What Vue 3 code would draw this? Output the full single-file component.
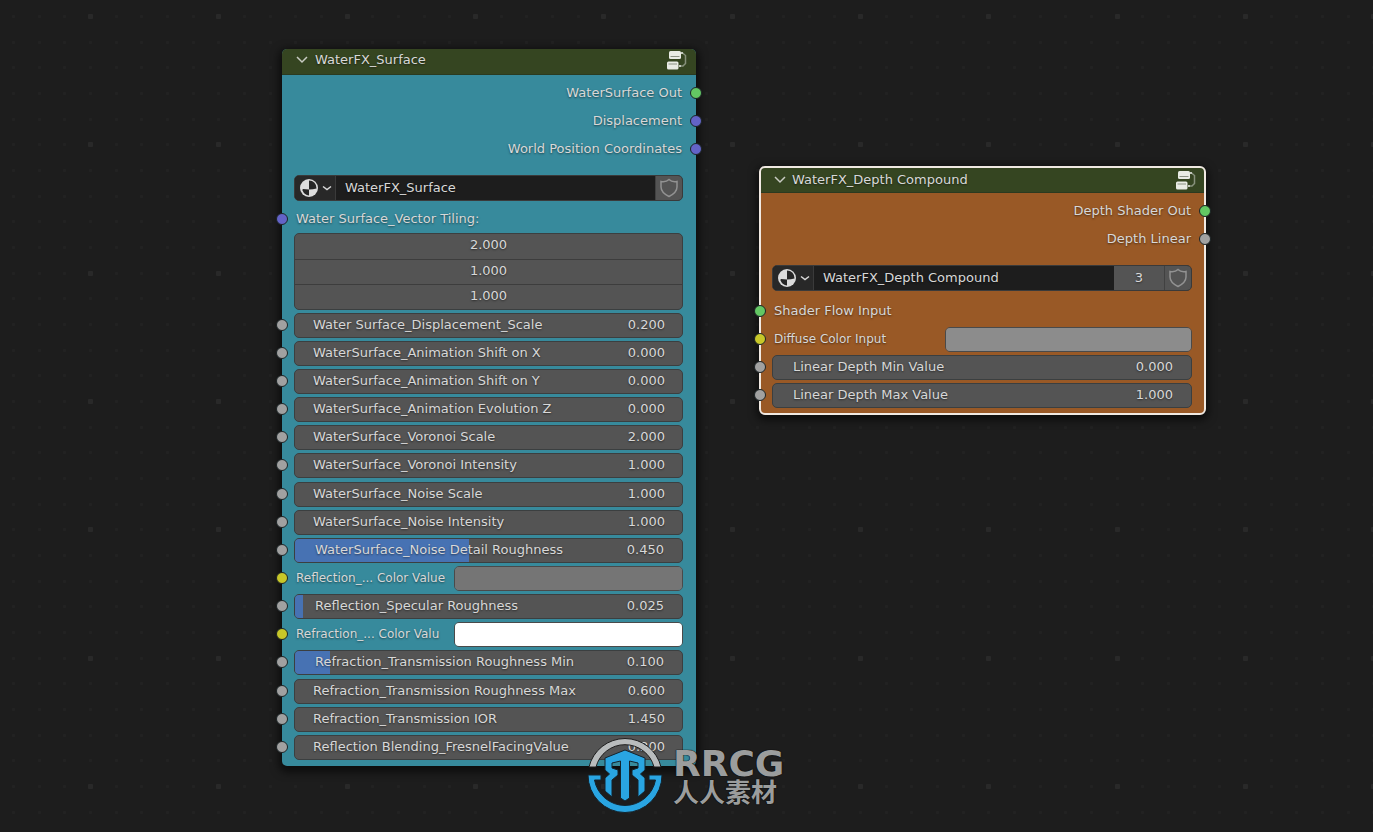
<script setup>
import { reactive } from 'vue'

const dots = []
for (let row = 0; row < 15; row++) {
  for (let col = 0; col < 15; col++) {
    const major = row % 5 === 0 && col % 5 === 0
    dots.push({
      x: Math.round((col * 385) / 15),
      y: Math.round((row * 385) / 15),
      size: major ? 5 : 3,
      tone: major ? 'major' : 'minor'
    })
  }
}

const nodes = reactive([
  {
    id: 'surface',
    title: 'WaterFX_Surface',
    outputs: [
      { name: 'WaterSurface Out', socket: 'green' },
      { name: 'Displacement', socket: 'purple' },
      { name: 'World Position Coordinates', socket: 'purple' }
    ],
    group: 'WaterFX_Surface',
    users: null,
    vector: { name: 'Water Surface_Vector Tiling:', values: ['2.000', '1.000', '1.000'] },
    sections: [
      [
        { kind: 'number', socket: 'grey', name: 'Water Surface_Displacement_Scale', value: '0.200' },
        { kind: 'number', socket: 'grey', name: 'WaterSurface_Animation Shift on X', value: '0.000' },
        { kind: 'number', socket: 'grey', name: 'WaterSurface_Animation Shift on Y', value: '0.000' },
        { kind: 'number', socket: 'grey', name: 'WaterSurface_Animation Evolution Z', value: '0.000' },
        { kind: 'number', socket: 'grey', name: 'WaterSurface_Voronoi Scale', value: '2.000' },
        { kind: 'number', socket: 'grey', name: 'WaterSurface_Voronoi Intensity', value: '1.000' }
      ],
      [
        { kind: 'number', socket: 'grey', name: 'WaterSurface_Noise Scale', value: '1.000' },
        { kind: 'number', socket: 'grey', name: 'WaterSurface_Noise Intensity', value: '1.000' },
        { kind: 'number', socket: 'grey', name: 'WaterSurface_Noise Detail Roughness', value: '0.450', fill: 45 },
        { kind: 'color', socket: 'yellow', name: 'Reflection_... Color Value', value: '#757575' },
        { kind: 'number', socket: 'grey', name: 'Reflection_Specular Roughness', value: '0.025', fill: 2 },
        { kind: 'color', socket: 'yellow', name: 'Refraction_... Color Valu', value: '#ffffff' },
        { kind: 'number', socket: 'grey', name: 'Refraction_Transmission Roughness Min', value: '0.100', fill: 9 }
      ],
      [
        { kind: 'number', socket: 'grey', name: 'Refraction_Transmission Roughness Max', value: '0.600' },
        { kind: 'number', socket: 'grey', name: 'Refraction_Transmission IOR', value: '1.450' },
        { kind: 'number', socket: 'grey', name: 'Reflection Blending_FresnelFacingValue', value: '0.200' }
      ]
    ]
  },
  {
    id: 'depth',
    title: 'WaterFX_Depth Compound',
    outputs: [
      { name: 'Depth Shader Out', socket: 'green' },
      { name: 'Depth Linear', socket: 'grey' }
    ],
    group: 'WaterFX_Depth Compound',
    users: 3,
    vector: null,
    sections: [
      [
        { kind: 'label', socket: 'green', name: 'Shader Flow Input' },
        { kind: 'color', socket: 'yellow', name: 'Diffuse Color Input', value: '#8c8c8c' },
        { kind: 'number', socket: 'grey', name: 'Linear Depth Min Value', value: '0.000' },
        { kind: 'number', socket: 'grey', name: 'Linear Depth Max Value', value: '1.000' }
      ]
    ]
  }
])
</script>

<template>
  <main class="canvas">
    <svg class="grid" aria-hidden="true">
      <defs>
        <pattern id="dots" x="88" y="14" width="385" height="385" patternUnits="userSpaceOnUse">
          <rect
            v-for="(d, i) in dots"
            :key="i"
            :class="d.tone"
            :x="d.tone === 'major' ? d.x : d.x + 1"
            :y="d.tone === 'major' ? d.y : d.y + 1"
            :width="d.size"
            :height="d.size"
            rx="1"
          />
        </pattern>
      </defs>
      <rect width="100%" height="100%" fill="url(#dots)" />
    </svg>

    <section v-for="node in nodes" :key="node.id" class="node" :class="node.id" :aria-label="node.title">
      <header class="head">
        <button class="collapse" type="button" aria-label="Collapse">
          <svg width="14" height="10" viewBox="0 0 14 10"><path d="M2 2l5 5 5-5" fill="none" stroke="#c8cbc3" stroke-width="1.5" /></svg>
        </button>
        <h2 class="title">{{ node.title }}</h2>
        <svg class="tree" width="20" height="20" viewBox="0 0 20 20" aria-hidden="true">
          <rect x="2" y="1" width="12" height="8" rx="1.5" fill="#e9ebe5" />
          <path d="M3.500 6.500h9" stroke="#8b9184" stroke-width="1" />
          <rect x="0" y="11.500" width="11.500" height="8" rx="1.500" fill="#e9ebe5" />
          <path d="M1.500 14h8.500" stroke="#8b9184" stroke-width="1" />
          <path d="M15 2.500l3.500 3v8L16 16h-3" fill="none" stroke="#87917c" stroke-width="1.500" />
          <path d="M14 3h2M12 16h2" stroke="#c4c9be" stroke-width="2" />
        </svg>
      </header>

      <ul class="outputs">
        <li v-for="out in node.outputs" :key="out.name" class="row output">
          {{ out.name }}<i class="socket right" :class="out.socket"></i>
        </li>
      </ul>

      <div class="datablock">
        <button class="browse" type="button" aria-label="Browse node groups">
          <svg width="20" height="20" viewBox="0 0 20 20">
            <circle cx="10" cy="10" r="9" fill="#dcdcdc" />
            <path d="M10 2.500A7.500 7.500 0 0 1 17.500 10.500Q14 11.500 10 11.500z" fill="#262626" />
            <path d="M10 11.500V17.500Q5.500 17 3.500 12.500Q3 11.500 4 11z" fill="#262626" />
          </svg>
          <svg width="10" height="8" viewBox="0 0 10 8"><path d="M1 2.500L5 5.500l4-3" fill="none" stroke="#d8d8d8" stroke-width="1.500" /></svg>
        </button>
        <input v-model="node.group" class="name" type="text" aria-label="Node group name" />
        <button v-if="node.users" class="users" type="button" aria-label="Users">{{ node.users }}</button>
        <button class="shield" type="button" aria-label="Fake user">
          <svg width="20" height="20" viewBox="0 0 20 20"><path d="M10 1.500C8 3.500 5 4 2 3.500V9c0 4.500 4 7.500 8 9.500 4-2 8-5 8-9.500V3.500C15 4 12 3.500 10 1.500z" fill="none" stroke="#929292" stroke-width="1.500" /></svg>
        </button>
      </div>

      <fieldset v-if="node.vector" class="vector">
        <legend class="row">{{ node.vector.name }}</legend>
        <i class="socket left purple"></i>
        <div class="stack">
          <input
            v-for="(v, i) in node.vector.values"
            :key="i"
            v-model="node.vector.values[i]"
            type="text"
            :aria-label="node.vector.name + ' ' + 'XYZ'[i]"
          />
        </div>
      </fieldset>

      <div class="sections">
        <div v-for="(section, s) in node.sections" :key="s" class="section">
          <div v-for="item in section" :key="item.name" class="row">
            <i class="socket left" :class="item.socket"></i>
            <label v-if="item.kind === 'number'" class="field" :class="{ slider: item.fill }">
              <span v-if="item.fill" class="fill" :style="{ width: item.fill + '%' }"></span>
              <span class="caption">{{ item.name }}</span>
              <input v-model="item.value" type="text" />
            </label>
            <label v-else-if="item.kind === 'color'" class="color">
              <span class="tag">{{ item.name }}</span>
              <input v-model="item.value" type="color" />
            </label>
            <span v-else class="plain">{{ item.name }}</span>
          </div>
        </div>
      </div>
    </section>

    <aside class="mark">
      <svg width="76" height="76" viewBox="0 0 76 76" aria-hidden="true">
        <path d="M2 29A37 37 0 0 1 74 29H67A30 30 0 0 0 9 29z" fill="#b9bcbd" stroke="#1d1d1d" />
        <path d="M1 37H14V42H7.500A31 31 0 0 0 68.500 42H62V37H75A37 37.500 0 1 1 1 37z" fill="#29a5e2" stroke="#14232c" />
        <path d="M38 12L58 20V32L53.500 36L58 40V53L51 59V42L45 37V32L51 30V25L42.500 23V60L38 63L33.500 60V23L25 25V30L31 32V37L25 42V59L18 53V40L22.500 36L18 32V20z" fill="#29a5e2" stroke="#14232c" />
      </svg>
      <p class="words"><span class="latin">RRCG</span><span class="han" lang="zh">人人素材</span></p>
    </aside>
  </main>
</template>

<style>
body {
  margin: 0;
  background: #1d1d1d;
}
</style>

<style scoped>
.canvas {
  position: relative;
  min-height: 100vh;
  overflow: hidden;
  background: #1d1d1d;
  color: #d8d8d8;
  font-family: "DejaVu Sans", sans-serif;
  font-size: 13px;
  line-height: 16px;
}
.canvas * {
  box-sizing: border-box;
}
.grid {
  position: absolute;
  inset: 0;
  width: 100%;
  height: 100%;
}
.major {
  fill: #292929;
}
.minor {
  fill: #222222;
}
button,
input {
  margin: 0;
  border: 0;
  padding: 0;
  background: none;
  color: inherit;
  font: inherit;
  text-shadow: inherit;
}
button {
  display: flex;
  align-items: center;
  justify-content: center;
}
.node {
  position: absolute;
  padding-bottom: 5px;
  border-radius: 5px;
  text-shadow: 0 1px 2px rgba(0, 0, 0, 0.5);
  box-shadow: 0 3px 9px 3px rgba(0, 0, 0, 0.6);
}
.surface {
  left: 282px;
  top: 49px;
  width: 414px;
  background: #378a9c;
}
.depth {
  left: 760px;
  top: 167px;
  width: 445px;
  background: #995926;
  outline: 2px solid #f0e9e2;
  outline-offset: -1px;
}
.head {
  display: flex;
  align-items: center;
  height: 26px;
  padding: 0 9px 4px 12px;
  border-bottom: 1px solid #2b3a20;
  border-radius: 5px 5px 0 0;
  background: #354521;
}
.depth .head {
  padding-bottom: 0;
}
.collapse {
  width: 16px;
  height: 16px;
  margin-right: 5px;
}
.depth .collapse {
  margin-right: 4px;
}
.title {
  flex: 1;
  margin: 0;
  font-size: 13px;
  font-weight: 400;
}
.outputs {
  margin: 0;
  padding: 4px 0 0;
  list-style: none;
}
.row {
  position: relative;
  display: flex;
  align-items: center;
  height: 28px;
  padding: 0 13px;
}
.output {
  justify-content: flex-end;
  padding: 0 14px;
}
.socket {
  position: absolute;
  top: 8px;
  width: 12px;
  height: 12px;
  border: 1px solid #1c2426;
  border-radius: 50%;
}
.left {
  left: -6px;
}
.right {
  right: -6px;
}
.green {
  background: #63c763;
}
.purple {
  background: #6363c7;
}
.grey {
  background: #a1a1a1;
}
.yellow {
  background: #c7c729;
}
.datablock {
  display: flex;
  height: 26px;
  margin: 12px 13px 4px 12px;
  border: 1px solid #3a3a3a;
  border-radius: 5px;
  background: #1d1d1d;
  overflow: hidden;
}
.depth .datablock {
  margin-bottom: 6px;
}
.browse {
  gap: 3px;
  width: 41px;
  border-right: 1px solid #3a3a3a;
  background: #282828;
}
.name {
  flex: 1;
  min-width: 0;
  padding: 0 9px;
}
.users {
  width: 50px;
  background: #545454;
}
.shield {
  width: 27px;
  border-left: 1px solid #414141;
  background: #545454;
}
.vector {
  position: relative;
  margin: 0;
  border: 0;
  padding: 0;
}
.vector legend {
  padding: 0 14px;
}
.vector > .socket {
  top: -20px;
}
.stack {
  display: flex;
  flex-direction: column;
  margin: 0 13px 1px 12px;
  border: 1px solid #3b3f40;
  border-radius: 5px;
  background: #545454;
  overflow: hidden;
}
.stack input {
  height: 25px;
  padding-bottom: 4px;
  text-align: center;
}
.stack input + input {
  border-top: 1px solid #3d3d3d;
}
.sections {
  display: grid;
  gap: 1px;
}
.field {
  position: relative;
  flex: 1;
  display: flex;
  align-items: center;
  height: 25px;
  margin-left: -1px;
  padding: 0 17px 0 18px;
  border: 1px solid #3b3f40;
  border-radius: 5px;
  background: #545454;
  overflow: hidden;
}
.slider,
.depth .field {
  padding: 0 18px 0 20px;
}
.fill {
  position: absolute;
  inset: 0 auto 0 0;
  background: #4772b3;
}
.caption {
  position: relative;
  flex: 1;
  white-space: nowrap;
}
.field input {
  position: relative;
  width: 44px;
  text-align: right;
}
.color {
  flex: 1;
  display: flex;
  align-items: center;
  justify-content: space-between;
}
.tag {
  padding-left: 1px;
  font-size: 12px;
  white-space: nowrap;
}
.plain {
  padding-left: 1px;
}
.color input {
  width: 59%;
  height: 25px;
  border: 1px solid #4a4a4a;
  border-radius: 5px;
  overflow: hidden;
}
.color input::-webkit-color-swatch-wrapper {
  padding: 0;
}
.color input::-webkit-color-swatch {
  border: 0;
}
.mark {
  position: absolute;
  left: 587px;
  top: 738px;
  display: flex;
  gap: 10px;
}
.words {
  display: flex;
  flex-direction: column;
  margin: 0;
  padding-top: 9px;
  color: #9b9d9d;
  font-weight: 700;
  text-shadow: 0 0 1px #000, 0 0 1px #000;
}
.latin {
  font-size: 36px;
  line-height: 34px;
}
.han {
  font-family: "Noto Sans CJK SC", sans-serif;
  font-size: 26px;
  line-height: 20px;
}
</style>
